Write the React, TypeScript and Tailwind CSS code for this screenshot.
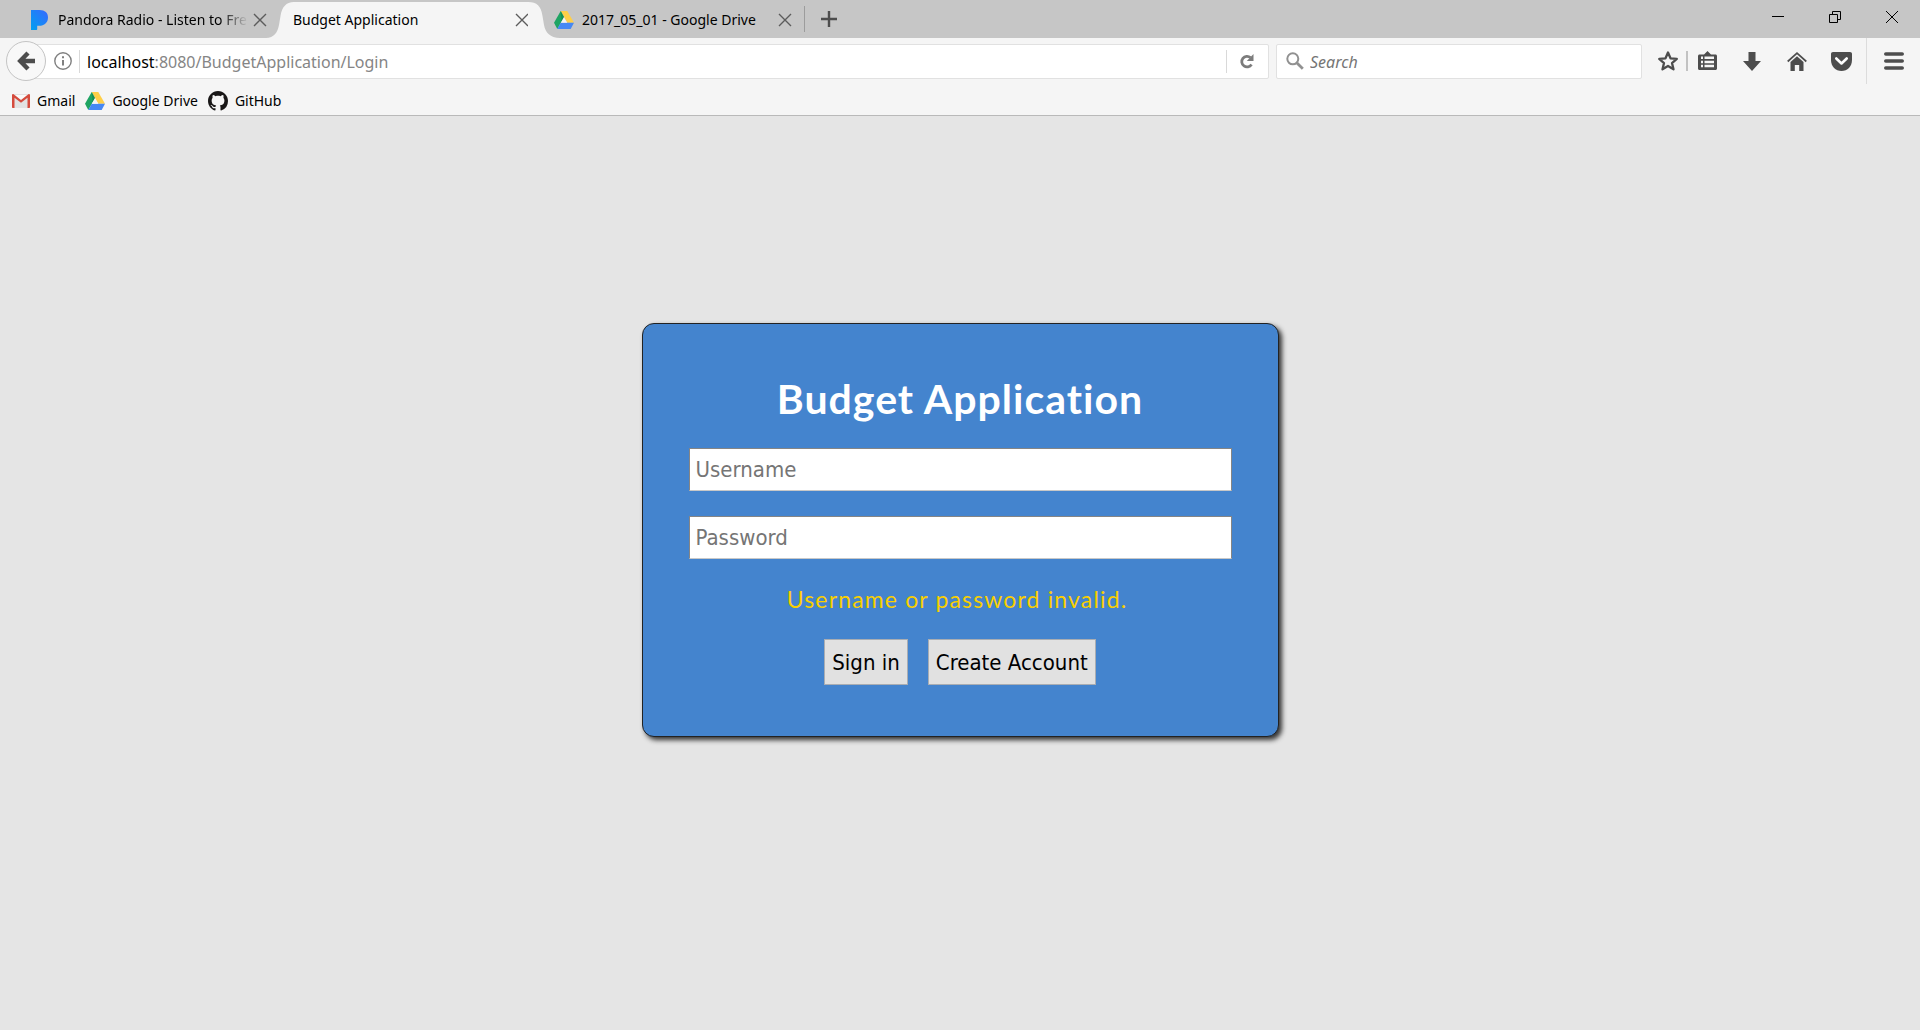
import type { ReactNode } from "react";

function CloseIcon() {
  return (
    <svg width="14" height="14" viewBox="0 0 14 14" fill="none" stroke="#5c5c5c" strokeWidth="1.4" aria-hidden="true">
      <path d="M1 1l12 12M13 1L1 13" />
    </svg>
  );
}

function PandoraIcon() {
  return (
    <svg width="17" height="20" viewBox="0 0 17 20" aria-hidden="true">
      <defs>
        <linearGradient id="pandora" x1="0" y1="1" x2="1" y2="0">
          <stop offset="0" stopColor="#00a0f0" />
          <stop offset="1" stopColor="#3868fe" />
        </linearGradient>
      </defs>
      <path fill="url(#pandora)" d="M0 0h8.500c5.500 0 8.500 2.800 8.500 7.400 0 5-3.600 8.400-9 8.400H6.200V19c0 .7-.3 1-1 1H0z" />
    </svg>
  );
}

function DriveIcon() {
  return (
    <svg width="20" height="18" viewBox="0 0 20 18" aria-hidden="true">
      <path fill="#ffcf48" d="M6.700 0h6.600L20 11.700h-6.700z" />
      <path fill="#1fa463" d="M6.700 0L0 11.800 3.300 18 10 6z" />
      <path fill="#4688f4" d="M6.700 11.700H20L16.700 18H3.300z" />
      <path fill="#0d7a45" d="M6.700 0L10 6 7.600 10.200z" opacity=".5" />
      <path fill="#f5f5f5" d="M10 6.200l3.200 5.500H6.900z" />
    </svg>
  );
}

function GmailIcon() {
  return (
    <svg width="18" height="14" viewBox="0 0 18 14" aria-hidden="true">
      <path fill="#e2e2e2" d="M1 0h16v14H1z" />
      <path fill="#fafafa" d="M2.500 1h13L9 6.800z" />
      <path fill="#d54b3d" d="M1.300 0L9 6l7.700-6C17.500 0 18 .5 18 1.300V13c0 .6-.4 1-1 1h-1.500V3.700L9 8.700l-6.500-5V14H1c-.6 0-1-.4-1-1V1.300C0 .5.5 0 1.300 0z" />
    </svg>
  );
}

function GitHubIcon() {
  return (
    <svg width="20" height="20" viewBox="0 0 16 16" fill="#191717" aria-hidden="true">
      <path d="M8 0C3.580 0 0 3.580 0 8c0 3.540 2.290 6.530 5.470 7.590.4.07.55-.17.55-.38 0-.19-.01-.82-.01-1.490-2.010.37-2.530-.49-2.690-.94-.09-.23-.48-.94-.82-1.130-.28-.15-.68-.52-.01-.53.63-.01 1.080.58 1.230.82.72 1.210 1.870.87 2.330.66.07-.52.28-.87.51-1.070-1.780-.2-3.640-.89-3.640-3.950 0-.87.31-1.590.82-2.150-.08-.2-.36-1.020.08-2.120 0 0 .67-.21 2.200.82.64-.18 1.320-.27 2-.27.68 0 1.360.09 2 .27 1.530-1.040 2.200-.82 2.200-.82.44 1.100.16 1.920.08 2.120.51.56.82 1.270.82 2.150 0 3.070-1.870 3.750-3.650 3.950.29.25.54.73.54 1.480 0 1.070-.01 1.930-.01 2.200 0 .21.15.46.55.38A8.013 8.013 0 0016 8c0-4.420-3.580-8-8-8z" />
    </svg>
  );
}

function TabEdgeLeft() {
  return (
    <svg width="28" height="36" viewBox="0 0 28 36" className="-mx-px shrink-0" aria-hidden="true">
      <path fill="#f5f5f5" d="M0 36C8 35.500 11.500 31 13 23l1.500-9C16 5 20 0 28 0v36z" />
    </svg>
  );
}

function TabEdgeRight() {
  return (
    <svg width="32" height="36" viewBox="0 0 32 36" className="-mr-1.5 -ml-px shrink-0" aria-hidden="true">
      <path fill="#f5f5f5" d="M0 0c9 0 13 4 14.500 14l1.500 9C17.500 31 22 35.500 32 36H0z" />
    </svg>
  );
}

function ToolButton({ label, children }: { label: string; children: ReactNode }) {
  return (
    <button type="button" aria-label={label} className="flex h-10 w-[45px] items-center justify-center">
      {children}
    </button>
  );
}

function WindowButton({ label, children }: { label: string; children: ReactNode }) {
  return (
    <button type="button" aria-label={label} className="flex h-[34px] w-[57px] items-center justify-center">
      <svg width="14" height="14" viewBox="0 0 14 14" fill="none" stroke="#000" strokeWidth="1" aria-hidden="true">
        {children}
      </svg>
    </button>
  );
}

function TabStrip() {
  return (
    <div className="flex h-[38px] bg-[#c6c6c6] text-sm text-black">
      <div className="flex w-[267px] shrink-0 items-center pt-0.5 pl-[31px]">
        <PandoraIcon />
        <span className="ml-2.5 w-[190px] whitespace-nowrap [mask-image:linear-gradient(to_right,#000_85%,transparent)]">
          Pandora Radio - Listen to Fre
        </span>
        <button type="button" aria-label="Close Pandora tab" className="ml-auto">
          <CloseIcon />
        </button>
      </div>
      <div className="flex items-end">
        <TabEdgeLeft />
        <div className="flex h-9 w-[236px] items-center justify-between bg-[#f5f5f5]">
          <span>Budget Application</span>
          <button type="button" aria-label="Close Budget Application tab">
            <CloseIcon />
          </button>
        </div>
        <TabEdgeRight />
      </div>
      <div className="z-10 my-1.5 flex w-[251px] shrink-0 items-center border-r border-[#9c9c9c] pt-0.5 pr-3">
        <DriveIcon />
        <span className="ml-2 whitespace-nowrap">2017_05_01 - Google Drive</span>
        <button type="button" aria-label="Close Google Drive tab" className="ml-auto">
          <CloseIcon />
        </button>
      </div>
      <button type="button" aria-label="New tab" className="flex w-12 items-center justify-center">
        <svg width="16" height="16" viewBox="0 0 16 16" fill="none" stroke="#4d4d4d" strokeWidth="2.400" aria-hidden="true">
          <path d="M8 0v16M0 8h16" />
        </svg>
      </button>
      <div className="ml-auto flex">
        <WindowButton label="Minimize">
          <path d="M1 6.500h12" />
        </WindowButton>
        <WindowButton label="Restore">
          <path d="M1.500 4.500h8v8h-8zM4.500 4.500v-3h8v8h-3" />
        </WindowButton>
        <WindowButton label="Close">
          <path d="M1 1l12 12M13 1L1 13" />
        </WindowButton>
      </div>
    </div>
  );
}

function NavBar() {
  return (
    <div className="flex h-[46px] items-center pl-1.5">
      <button
        type="button"
        aria-label="Back"
        className="z-10 flex size-10 shrink-0 items-center justify-center rounded-full border border-[#c4c4c4] bg-[#f8f8f8]"
      >
        <svg width="18" height="20" viewBox="0 0 18 20" fill="none" stroke="#4d4d4d" strokeWidth="4.400" aria-hidden="true">
          <path d="M11 2L3.200 10 11 18M4 10h14" />
        </svg>
      </button>
      <div className="-ml-4 flex h-[35px] flex-1 items-center rounded-xs border border-[#e1e1e1] bg-white pl-[23px]">
        <svg width="18" height="18" viewBox="0 0 18 18" fill="none" stroke="#808080" strokeWidth="1.400" aria-hidden="true">
          <circle cx="9" cy="9" r="8.200" />
          <path d="M9 8v5.500M9 4.300v2" strokeWidth="2" />
        </svg>
        <div className="mx-[7px] h-[23px] w-px bg-[#d9d9d9]" />
        <div className="flex-1 pt-0.5 text-base text-[#858585]">
          <span className="text-black">localhost</span>:8080/BudgetApplication/Login
        </div>
        <div className="h-[23px] w-px bg-[#d9d9d9]" />
        <button type="button" aria-label="Reload" className="flex w-[41px] items-center justify-center pr-0.5">
          <svg width="14" height="15" viewBox="0 0 14 15" aria-hidden="true">
            <path d="M11.500 10.500A5.300 5.300 0 1 1 10.500 3.600" fill="none" stroke="#7c7c7c" strokeWidth="2.800" />
            <path d="M13.500 0v7H6.800z" fill="#7c7c7c" />
          </svg>
        </button>
      </div>
      <div className="ml-[7px] flex h-[35px] w-[366px] items-center rounded-xs border border-[#e1e1e1] bg-white pl-[9px]">
        <svg width="18" height="18" viewBox="0 0 18 18" fill="none" stroke="#919191" aria-hidden="true">
          <circle cx="6.800" cy="6.800" r="5.500" strokeWidth="2" />
          <path d="M11 11l5.800 5.800" strokeWidth="2.800" />
        </svg>
        <input
          type="text"
          aria-label="Search"
          placeholder="Search"
          className="ml-1.5 min-w-0 flex-1 pt-0.5 text-base outline-none placeholder:text-[#757575] placeholder:italic"
        />
      </div>
      <button type="button" aria-label="Bookmark this page" className="ml-2 flex h-10 w-9 items-center justify-center">
        <svg width="22" height="22" viewBox="0 0 22 22" fill="none" stroke="#4d4d4d" strokeWidth="2.300" strokeLinejoin="round" aria-hidden="true">
          <path d="M11 2.500l2.500 5.800 6.300.6-4.800 4.200 1.500 6.200L11 16l-5.500 3.300L7 13.100 2.200 8.900l6.300-.6z" />
        </svg>
      </button>
      <div className="h-5 w-0.5 bg-[#c2c2c2]" />
      <button type="button" aria-label="Bookmarks list" className="flex h-10 w-[41px] items-center justify-center pr-0.5">
        <svg width="19" height="20" viewBox="0 0 19 20" aria-hidden="true">
          <path fill="#4d4d4d" d="M6 3.500L9.500 0 13 3.500h4.500c.8 0 1.500.7 1.500 1.500v12.500c0 .8-.7 1.500-1.500 1.500h-16C.7 19 0 18.300 0 17.500V5c0-.8.700-1.500 1.500-1.500z" />
          <path fill="#f5f5f5" d="M3 5.500h2v2.600H3zM6.500 5.500H16v2.600H6.500zM3 9.700h2v2.600H3zM6.500 9.700H16v2.600H6.500zM3 13.800h2v2.400H3zM6.500 13.800H16v2.400H6.500z" />
        </svg>
      </button>
      <ToolButton label="Downloads">
        <svg width="18" height="19" viewBox="0 0 18 19" fill="#4d4d4d" aria-hidden="true">
          <path d="M5.500 0h7v9H18l-9 10L0 9h5.500z" />
        </svg>
      </ToolButton>
      <ToolButton label="Home">
        <svg width="20" height="19" viewBox="0 0 20 19" aria-hidden="true">
          <path d="M.7 9.500L10 1.200l9.300 8.300" fill="none" stroke="#4d4d4d" strokeWidth="1.700" />
          <path d="M10 4.200l6.500 5.900V19h-4.300v-6H7.800v6H3.500v-8.900z" fill="#4d4d4d" />
        </svg>
      </ToolButton>
      <ToolButton label="Save to Pocket">
        <svg width="21" height="19" viewBox="0 0 21 19" aria-hidden="true">
          <path d="M2 0h17c1.200 0 2 .8 2 2v6c0 6.500-4.600 11-10.500 11S0 14.500 0 8V2C0 .8.800 0 2 0z" fill="#4d4d4d" />
          <path d="M5.300 6.500l5.200 5 5.200-5" fill="none" stroke="#fff" strokeWidth="2.600" strokeLinecap="round" strokeLinejoin="round" />
        </svg>
      </ToolButton>
      <div className="ml-0.5 h-full w-px bg-[#dcdcdc]" />
      <button type="button" aria-label="Open menu" className="flex h-10 w-[53px] items-center justify-center">
        <svg width="20" height="18" viewBox="0 0 20 18" fill="none" stroke="#4d4d4d" strokeWidth="3.600" strokeLinecap="round" aria-hidden="true">
          <path d="M1.800 2h16.400M1.800 9h16.400M1.800 16h16.400" />
        </svg>
      </button>
    </div>
  );
}

function BookmarkBar() {
  const bookmarks = [
    { name: "Gmail", icon: <GmailIcon /> },
    { name: "Google Drive", icon: <DriveIcon /> },
    { name: "GitHub", icon: <GitHubIcon /> },
  ];
  return (
    <nav aria-label="Bookmarks" className="flex h-[31px] items-center gap-2.5 pt-[3px] pl-3 text-sm text-black">
      {bookmarks.map((bookmark) => (
        <a key={bookmark.name} href="#" className="flex items-center gap-[7px]">
          {bookmark.icon}
          {bookmark.name}
        </a>
      ))}
    </nav>
  );
}

function LoginForm() {
  const field =
    "block h-[43px] w-full border border-[#858585] border-b-[#c8c8c8] bg-white px-1.5 text-[22px] text-black outline-none placeholder:text-[#757575] placeholder:opacity-100";
  const button = "h-[46px] border border-[#a9adb3] bg-[#e1e1e1] px-[7px] text-[22px] text-black";
  return (
    <form
      onSubmit={(event) => event.preventDefault()}
      className="w-full max-w-[637px] rounded-xl border border-[#222] bg-[#4484ce] px-[46px] pt-[50px] pb-[51px] text-center shadow-[3px_3px_5px_#333]"
    >
      <h1 className="mb-6 font-[Lato] text-[41px] leading-[50px] font-bold tracking-wide text-white">Budget Application</h1>
      <div className="flex flex-col gap-[25px] font-['DejaVu_Sans_Condensed','Noto_Sans',sans-serif]">
        <input type="text" aria-label="Username" placeholder="Username" className={field} />
        <input type="password" aria-label="Password" placeholder="Password" className={field} />
      </div>
      <p role="alert" className="my-[25px] pr-1.5 font-[Lato] text-[23px] leading-[30px] tracking-wider text-[#f9cf00]">
        Username or password invalid.
      </p>
      <div className="flex justify-center gap-5 font-['DejaVu_Sans_Condensed','Noto_Sans',sans-serif]">
        <button type="submit" className={button}>
          Sign in
        </button>
        <button type="button" className={button}>
          Create Account
        </button>
      </div>
    </form>
  );
}

export default function App() {
  return (
    <div className="flex min-h-screen flex-col bg-[#e5e5e5] font-['Noto_Sans',sans-serif]">
      <header className="border-b border-[#b9b9b9] bg-[#f5f5f5]">
        <TabStrip />
        <NavBar />
        <BookmarkBar />
      </header>
      <main className="flex flex-1 items-start justify-center pt-[207px]">
        <LoginForm />
      </main>
    </div>
  );
}
